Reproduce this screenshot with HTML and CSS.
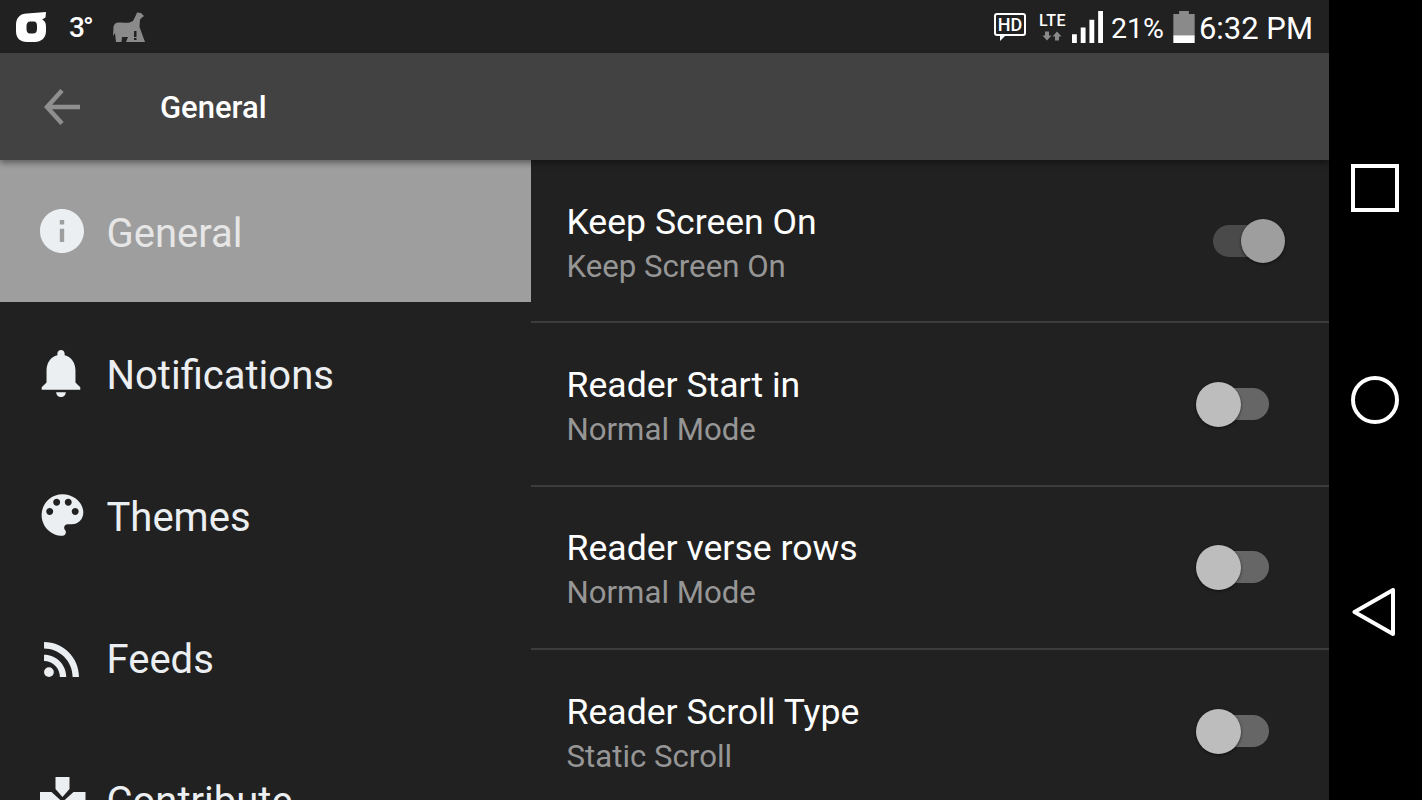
FILE: index.html
```html
<!DOCTYPE html>
<html lang="en">
<head>
    <meta charset="UTF-8">
    <title>General</title>
    <link rel="stylesheet" href="styles.css">
</head>
<body>
    <div class="device">
        <div class="screen">
            <div class="status-bar">
                <div class="status-left">
                    <svg class="carrier" viewBox="0 0 30 30"><path fill="#fff" fill-rule="evenodd" d="M11 1.500L30 0L29.500 5.500L26 7.500C29 9 30 11 30 15V19C30 26 25 30 19 30H11C4 30 0 26 0 19V13C0 6 4 1.500 11 1.500ZM14 9.500C12 9.500 10.500 11 10.500 14V17C10.500 19.500 11.500 21.500 14 21.500H17C19.500 21.500 21 20 21 17V14C21 11 20 9.500 18 9.500Z"/></svg>
                    <span class="temp">3°</span>
                    <svg class="llama" viewBox="0 0 32 30"><path fill="#8a8a8a" d="M24 .5L28 1L31 4L28.500 6L27 7.500L26.500 15L32 30H13L15 25H9L8.500 30H3L2 21L0 24L.5 15C1 11 4 10 8 10.500C13 11 17 11 20 9L23 3Z"/><path fill="#212121" d="M21 19H23.500V25H21ZM21 26H23.500V28H21Z"/></svg>
                </div>
                <div class="status-right">
                    <span class="hd"><span class="hd-text">HD</span></span>
                    <span class="lte"><span class="lte-text">LTE</span>
                        <svg class="lte-arrows" viewBox="0 0 20 9"><path fill="#8a8a8a" d="M3 0H7V4H9.500L5 9L.5 4H3ZM13 9V5H10.500L15 0L19.500 5H17V9Z"/></svg>
                    </span>
                    <svg class="signal" viewBox="0 0 32 33"><path fill="#fff" d="M0 24H5V33H0ZM9 17H14V33H9ZM18 9H23V33H18ZM27 0H32V33H27Z"/></svg>
                    <span class="battery-pct">21%</span>
                    <svg class="battery" viewBox="0 0 22 33"><path fill="#8a8a8a" d="M6 0H16V3H22V25H0V3H6Z"/><path fill="#fff" d="M0 25H22V33H0Z"/></svg>
                    <span class="clock">6:32 PM</span>
                </div>
            </div>

            <div class="toolbar">
                <svg class="back" viewBox="0 0 36 36"><path fill="none" stroke="#8f8f8f" stroke-width="4.500" d="M36 18H3M18 1.500L3 18L18 34.500"/></svg>
                <span class="toolbar-title">General</span>
            </div>

            <div class="content">
                <div class="sidebar">
                    <div class="nav-item active">
                        <svg class="nav-icon" viewBox="2 2 20 20"><path d="M12 2C6.480 2 2 6.480 2 12s4.480 10 10 10 10-4.480 10-10S17.520 2 12 2zm1 15h-2v-6h2v6zm0-8h-2V7h2v2z"/></svg>
                        <span>General</span>
                    </div>
                    <div class="nav-item">
                        <svg class="nav-icon bell" viewBox="3.500 2.500 17 19.500"><path d="M12 22c1.100 0 2-.9 2-2h-4c0 1.100.89 2 2 2zm6-6v-5c0-3.070-1.640-5.640-4.500-6.320V4c0-.83-.67-1.500-1.500-1.500s-1.500.67-1.500 1.500v.68C7.630 5.360 6 7.920 6 11v5l-2 2v1h16v-1l-2-2z"/></svg>
                        <span>Notifications</span>
                    </div>
                    <div class="nav-item">
                        <svg class="nav-icon" viewBox="2.300 2.500 19 19"><path d="M12 3c-4.970 0-9 4.030-9 9s4.030 9 9 9c.83 0 1.500-.67 1.500-1.500 0-.39-.15-.74-.39-1.010-.23-.26-.38-.61-.38-.99 0-.83.67-1.500 1.500-1.500H16c2.760 0 5-2.240 5-5 0-4.420-4.030-8-9-8zm-5.500 9c-.83 0-1.500-.67-1.500-1.500S5.670 9 6.500 9 8 9.670 8 10.500 7.330 12 6.500 12zm3-4C8.670 8 8 7.330 8 6.500S8.670 5 9.500 5s1.500.67 1.500 1.500S10.330 8 9.500 8zm5 0c-.83 0-1.500-.67-1.500-1.500S13.670 5 14.500 5s1.500.67 1.500 1.500S15.330 8 14.500 8zm3 4c-.83 0-1.500-.67-1.500-1.500S16.670 9 17.500 9s1.500.67 1.500 1.500-.67 1.500-1.500 1.500z"/></svg>
                        <span>Themes</span>
                    </div>
                    <div class="nav-item">
                        <svg class="nav-icon" viewBox="2.200 1.300 19.600 19.600"><circle cx="6.180" cy="17.820" r="2.180"/><path d="M4 4.440v2.830c7.030 0 12.730 5.700 12.730 12.730h2.830c0-8.590-6.970-15.560-15.560-15.560zm0 5.660v2.830c3.900 0 7.070 3.170 7.070 7.070h2.830c0-5.470-4.430-9.900-9.900-9.900z"/></svg>
                        <span>Feeds</span>
                    </div>
                    <div class="nav-item">
                        <svg class="nav-icon contribute" viewBox="0.500 0 46 46"><path d="M16 1H30V13L23 21L16 13ZM0 16H12L23 26L34 16H46V46H0Z"/></svg>
                        <span>Contribute</span>
                    </div>
                </div>

                <div class="settings">
                    <div class="setting-row">
                        <div class="setting-text">
                            <div class="setting-title">Keep Screen On</div>
                            <div class="setting-sub">Keep Screen On</div>
                        </div>
                        <div class="switch on"><span class="thumb"></span></div>
                    </div>
                    <div class="setting-row">
                        <div class="setting-text">
                            <div class="setting-title">Reader Start in</div>
                            <div class="setting-sub">Normal Mode</div>
                        </div>
                        <div class="switch"><span class="thumb"></span></div>
                    </div>
                    <div class="setting-row">
                        <div class="setting-text">
                            <div class="setting-title">Reader verse rows</div>
                            <div class="setting-sub">Normal Mode</div>
                        </div>
                        <div class="switch"><span class="thumb"></span></div>
                    </div>
                    <div class="setting-row">
                        <div class="setting-text">
                            <div class="setting-title">Reader Scroll Type</div>
                            <div class="setting-sub">Static Scroll</div>
                        </div>
                        <div class="switch"><span class="thumb"></span></div>
                    </div>
                </div>
            </div>
        </div>

        <div class="nav-bar">
            <svg class="nav-btn" viewBox="0 0 48 48"><rect x="2" y="2" width="44" height="44" fill="none" stroke="#fff" stroke-width="4"/></svg>
            <svg class="nav-btn" viewBox="0 0 48 48"><circle cx="24" cy="24" r="22" fill="none" stroke="#fff" stroke-width="4"/></svg>
            <svg class="nav-btn" viewBox="0 0 48 48"><path fill="none" stroke="#fff" stroke-width="4" stroke-linejoin="round" d="M3.500 24L42 2V46Z"/></svg>
        </div>
    </div>
</body>
</html>
```

FILE: styles.css
```css
html, body {
    margin: 0;
    height: 800px;
    overflow: hidden;
    background-color: #000;
}
body {
    font-family: Roboto, "Noto Sans", sans-serif;
}
.device {
    display: flex;
    width: 1422px;
    height: 800px;
}
.screen {
    display: flex;
    flex-direction: column;
    width: 1329px;
    height: 800px;
    background-color: #212121;
    overflow: hidden;
}

/* status bar */
.status-bar {
    display: flex;
    justify-content: space-between;
    align-items: center;
    flex: 0 0 53px;
    padding: 0 16px 0 16px;
    color: #fff;
}
.status-left, .status-right {
    display: flex;
    align-items: center;
}
.carrier {
    width: 30px;
    height: 30px;
    margin-right: 23px;
}
.temp {
    width: 44px;
    padding-top: 2px;
    font-size: 28px;
    font-weight: 500;
    letter-spacing: -2px;
}
.llama {
    width: 32px;
    height: 30px;
}
.hd {
    display: flex;
    justify-content: center;
    align-items: center;
    box-sizing: border-box;
    width: 32px;
    height: 23px;
    margin: -4px 13px 0 0;
    border: 2px solid #fff;
    border-radius: 3px;
    position: relative;
}
.hd::after {
    content: "";
    position: absolute;
    left: 4px;
    bottom: -7px;
    border-top: 6px solid #fff;
    border-right: 6px solid transparent;
}
.hd-text {
    font-size: 18px;
    font-weight: 500;
    line-height: 1;
}
.lte {
    display: flex;
    flex-direction: column;
    align-items: center;
    width: 27px;
    margin-right: 6px;
}
.lte-text {
    font-size: 16px;
    font-weight: 500;
    line-height: 15px;
    letter-spacing: 0.5px;
}
.lte-arrows {
    width: 20px;
    height: 10px;
    margin-top: 3px;
}
.signal {
    width: 31px;
    height: 32px;
    margin-right: 8px;
}
.battery-pct {
    padding-top: 3px;
    font-size: 28.500px;
    margin-right: 9px;
}
.battery {
    width: 22px;
    height: 32px;
    margin-right: 4px;
}
.clock {
    padding-top: 3px;
    font-size: 31px;
}

/* toolbar */
.toolbar {
    display: flex;
    align-items: center;
    flex: 0 0 107px;
    padding-left: 44px;
    background-color: #424242;
    box-shadow: 0 3px 6px rgba(0, 0, 0, 0.4);
    position: relative;
    z-index: 1;
}
.back {
    width: 36px;
    height: 36px;
    margin-right: 80px;
}
.toolbar-title {
    padding-top: 2px;
    color: #fff;
    font-size: 31px;
    font-weight: 500;
}

/* main area */
.content {
    display: flex;
    flex: 1;
    min-height: 0;
}
.sidebar {
    flex: 0 0 531px;
}
.nav-item {
    display: flex;
    align-items: center;
    height: 142px;
    padding-left: 40px;
    color: #eceff1;
    font-size: 40px;
}
.nav-item span {
    padding-top: 5px;
}
.nav-item.active {
    background-color: #9e9e9e;
    color: #e6e6e6;
}
.nav-icon {
    width: 44px;
    height: 44px;
    margin-right: 22.500px;
    fill: #eceff1;
}
.nav-icon.bell {
    width: 42px;
    height: 47px;
    margin-right: 24.500px;
}
.nav-icon.contribute {
    width: 46px;
    height: 46px;
    margin-right: 20.500px;
}
.settings {
    flex: 1;
}
.setting-row {
    display: flex;
    justify-content: space-between;
    align-items: center;
    box-sizing: border-box;
    height: 163.300px;
    padding: 0 60px 0 35.500px;
    border-bottom: 2px solid #3c3c3c;
}
.setting-text {
    padding-top: 8px;
}
.setting-title {
    color: #fff;
    font-size: 35.600px;
    line-height: 44px;
}
.setting-sub {
    color: #969696;
    font-size: 31.200px;
    line-height: 46px;
}
.switch {
    width: 56px;
    height: 32px;
    border-radius: 16px;
    background-color: #666;
    position: relative;
}
.switch.on {
    background-color: #4a4a4a;
}
.thumb {
    position: absolute;
    top: -6px;
    left: -17px;
    width: 45px;
    height: 45px;
    border-radius: 50%;
    background-color: #bdbdbd;
    box-shadow: 0 1px 3px rgba(0, 0, 0, 0.6);
}
.switch.on .thumb {
    left: 28px;
    width: 44px;
    height: 44px;
    background-color: #9e9e9e;
}

/* android nav */
.nav-bar {
    display: flex;
    flex-direction: column;
    align-items: center;
    flex: 0 0 93px;
    padding: 164px 1px 0 0;
    box-sizing: border-box;
    gap: 164px;
}
.nav-btn {
    width: 48px;
    height: 48px;
}
```
